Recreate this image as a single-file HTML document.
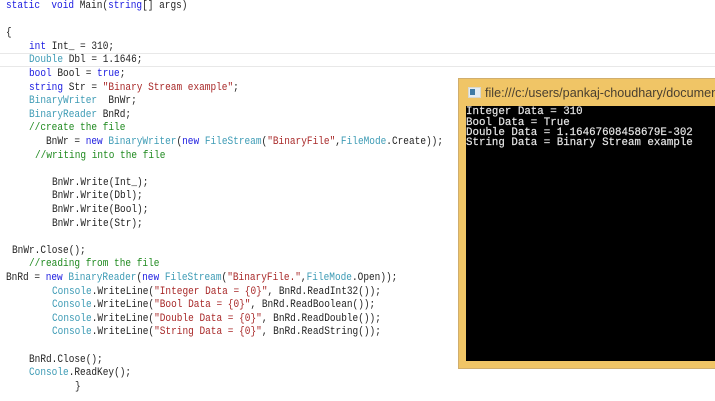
<!DOCTYPE html>
<html><head><meta charset="utf-8">
<style>
html,body{margin:0;padding:0;width:715px;height:401px;overflow:hidden;background:#fff}
#c{position:absolute;left:0;top:0;width:715px;height:401px;overflow:hidden;filter:blur(.35px)}
.l{position:absolute;font:11px/14px "Liberation Mono",monospace;white-space:pre;color:#222;transform:scaleX(.859);transform-origin:0 0;margin-top:.5px}
.k{color:#1a1ae0}.t{color:#3d9bb5}.s{color:#a82828}.g{color:#1f8a1f}
#hl{position:absolute;left:0;top:53px;width:715px;height:12px;border-top:1px solid #e8e8e8;border-bottom:1px solid #e8e8e8}
#w{position:absolute;left:458px;top:78px;width:257px;height:291px;background:#f0c566;box-shadow:inset 1px 1px 0 #d0ae6e,inset 0 -1px 0 #d0ae6e}
#b{position:absolute;left:466px;top:106px;width:249px;height:255px;background:#000}
#i{position:absolute;left:468px;top:87px;width:11px;height:9px;background:#e4ecf2;border:1px solid #d8d8d0;box-sizing:content-box}
#i2{position:absolute;left:470px;top:89px;width:5px;height:6px;background:#3f7aa3}
#ti{position:absolute;left:485px;top:85px;font:12.6px/17px "Liberation Sans",sans-serif;color:#4a4030;white-space:pre}
.o{position:absolute;left:466px;font:10.8px/10px "Liberation Mono",monospace;color:#e4e4e4;white-space:pre;-webkit-text-stroke:.2px #e4e4e4}
</style></head><body>
<div id="c">
<div id="hl"></div>
<div class="l" style="left:6px;top:-2px"><span class="k">static</span>  <span class="k">void</span> Main(<span class="k">string</span>[] args)</div>
<div class="l" style="left:6px;top:25px">{</div>
<div class="l" style="left:29px;top:39px"><span class="k">int</span> Int_ = 310;</div>
<div class="l" style="left:29px;top:52px"><span class="t">Double</span> Dbl = 1.1646;</div>
<div class="l" style="left:29px;top:66px"><span class="k">bool</span> Bool = <span class="k">true</span>;</div>
<div class="l" style="left:29px;top:80px"><span class="k">string</span> Str = <span class="s">"Binary Stream example"</span>;</div>
<div class="l" style="left:29px;top:93px"><span class="t">BinaryWriter</span>  BnWr;</div>
<div class="l" style="left:29px;top:107px"><span class="t">BinaryReader</span> BnRd;</div>
<div class="l" style="left:29px;top:120px"><span class="g">//create the file</span></div>
<div class="l" style="left:46px;top:134px">BnWr = <span class="k">new</span> <span class="t">BinaryWriter</span>(<span class="k">new</span> <span class="t">FileStream</span>(<span class="s">"BinaryFile"</span>,<span class="t">FileMode</span>.Create));</div>
<div class="l" style="left:35px;top:148px"><span class="g">//writing into the file</span></div>
<div class="l" style="left:51.5px;top:175px">BnWr.Write(Int_);</div>
<div class="l" style="left:51.5px;top:188px">BnWr.Write(Dbl);</div>
<div class="l" style="left:51.5px;top:202px">BnWr.Write(Bool);</div>
<div class="l" style="left:51.5px;top:216px">BnWr.Write(Str);</div>
<div class="l" style="left:11.5px;top:243px">BnWr.Close();</div>
<div class="l" style="left:29px;top:256px"><span class="g">//reading from the file</span></div>
<div class="l" style="left:6px;top:270px">BnRd = <span class="k">new</span> <span class="t">BinaryReader</span>(<span class="k">new</span> <span class="t">FileStream</span>(<span class="s">"BinaryFile."</span>,<span class="t">FileMode</span>.Open));</div>
<div class="l" style="left:51.5px;top:284px"><span class="t">Console</span>.WriteLine(<span class="s">"Integer Data = {0}"</span>, BnRd.ReadInt32());</div>
<div class="l" style="left:51.5px;top:297px"><span class="t">Console</span>.WriteLine(<span class="s">"Bool Data = {0}"</span>, BnRd.ReadBoolean());</div>
<div class="l" style="left:51.5px;top:311px"><span class="t">Console</span>.WriteLine(<span class="s">"Double Data = {0}"</span>, BnRd.ReadDouble());</div>
<div class="l" style="left:51.5px;top:324px"><span class="t">Console</span>.WriteLine(<span class="s">"String Data = {0}"</span>, BnRd.ReadString());</div>
<div class="l" style="left:29px;top:352px">BnRd.Close();</div>
<div class="l" style="left:29px;top:365px"><span class="t">Console</span>.ReadKey();</div>
<div class="l" style="left:75px;top:379px">}</div>
<div id="w"></div>
<div id="b"></div>
<div id="i"></div><div id="i2"></div>
<div id="ti">file:///c:/users/pankaj-choudhary/documen</div>
<div class="o" style="top:107px">Integer Data = 310</div>
<div class="o" style="top:118px">Bool Data = True</div>
<div class="o" style="top:128px">Double Data = 1.16467608458679E-302</div>
<div class="o" style="top:138px">String Data = Binary Stream example</div>
</div>
</body></html>
